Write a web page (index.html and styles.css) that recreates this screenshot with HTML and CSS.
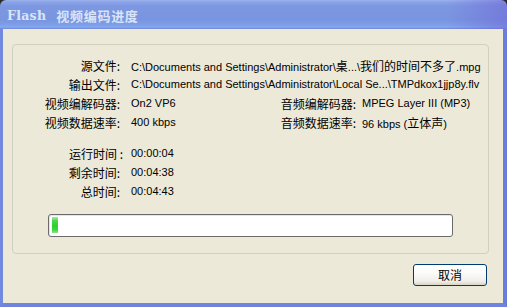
FILE: index.html
```html
<!DOCTYPE html>
<html>
<head>
<meta charset="utf-8">
<link rel="stylesheet" href="styles.css">
</head>
<body>
<div class="window">
  <div class="titlebar">
    <span class="title"><span class="t-lat">Flash</span><span class="t-zh">视频编码进度</span></span>
  </div>
  <div class="frame">
    <div class="group">
      <div class="info">
        <div class="lbl">源文件:</div>
        <div class="val wide">C:\Documents and Settings\Administrator\<span class="zh">桌</span>...\<span class="zh">我们的时间不多了</span>.mpg</div>
        <div class="lbl">输出文件:</div>
        <div class="val wide">C:\Documents and Settings\Administrator\Local Se...\TMPdkox1jjp8y.flv</div>
        <div class="lbl">视频编解码器:</div>
        <div class="val">On2 VP6</div>
        <div class="lbl lbl2">音频编解码器:</div>
        <div class="val">MPEG Layer III (MP3)</div>
        <div class="lbl">视频数据速率:</div>
        <div class="val">400 kbps</div>
        <div class="lbl lbl2">音频数据速率:</div>
        <div class="val">96 kbps (<span class="zh">立体声</span>)</div>
      </div>
      <div class="times">
        <div class="lbl"><span class="nudge">运行时间 :</span></div>
        <div class="val">00:00:04</div>
        <div class="lbl">剩余时间:</div>
        <div class="val">00:04:38</div>
        <div class="lbl">总时间:</div>
        <div class="val">00:04:43</div>
      </div>
      <div class="progress"><div class="chunk"></div></div>
    </div>
    <div class="actions">
      <button class="btn">取消</button>
    </div>
  </div>
</div>
</body>
</html>
```

FILE: styles.css
```css
html, body {
  margin: 0;
  padding: 0;
  background: #2b2b2b;
}
body {
  width: 507px;
  height: 307px;
  overflow: hidden;
}
.window {
  width: 507px;
  height: 307px;
  display: flex;
  flex-direction: column;
}
.titlebar {
  height: 29px;
  flex: none;
  border-radius: 6px 6px 0 0;
  background:
    linear-gradient(to right, rgba(110, 100, 215, 0) 88%, rgba(110, 100, 215, 0.55) 100%),
    linear-gradient(to bottom, #9db3ec 0, #8ba4e8 2px, #7d98e1 6px, #7a95df 20px, #7e9fe9 25px, #87a9ee 27px, #6f86dc 29px);
  display: flex;
  align-items: center;
  padding-left: 7px;
  box-sizing: border-box;
}
.title {
  color: #d8e4f8;
  font-weight: bold;
  display: flex;
  align-items: center;
  gap: 10px;
  margin-top: 1px;
}
.t-lat {
  font-family: "DejaVu Serif", serif;
  font-size: 12.5px;
  letter-spacing: 0.3px;
}
.t-zh {
  font-family: "Noto Sans CJK SC", sans-serif;
  font-size: 13px;
  letter-spacing: 0.7px;
}
.frame {
  flex: 1;
  background: #ece9d8;
  border-left: 3px solid #7389de;
  border-right: 4px solid #6a7ddb;
  border-bottom: 4px solid #6f84dd;
  padding: 15px 14px 0 9px;
  display: flex;
  flex-direction: column;
  font-family: "Liberation Sans", "Noto Sans CJK SC", sans-serif;
  font-size: 11px;
  color: #000;
}
.group {
  height: 210px;
  box-sizing: border-box;
  border: 1px solid #d0d0bf;
  border-radius: 4px;
  padding-top: 11px;
}
.info, .times {
  display: grid;
  grid-template-columns: 118px 148px 83px 1fr;
  grid-auto-rows: 19px;
  line-height: 19px;
}
.times {
  margin-top: 12px;
}
.lbl {
  font-family: "Noto Sans CJK SC", sans-serif;
  font-size: 12px;
  text-align: right;
  padding-right: 11px;
  white-space: nowrap;
}
.lbl2 {
  padding-right: 6px;
}
.nudge {
  margin-right: -3px;
}
.val {
  white-space: nowrap;
}
.wide {
  grid-column: 2 / 5;
}
.times .val {
  grid-column: 2 / 5;
}
.zh {
  font-family: "Noto Sans CJK SC", sans-serif;
  font-size: 12px;
}
.progress {
  margin: 13px 0 0 35px;
  width: 405px;
  height: 23px;
  box-sizing: border-box;
  border: 1px solid #6b6b6b;
  border-radius: 3px;
  background: #fff;
  box-shadow: inset 1px 1px 0 #e6e6e6;
  padding: 2px 3px;
}
.chunk {
  width: 6px;
  height: 16px;
  background: linear-gradient(to bottom, #a6eaa6 0, #45d745 25%, #2fcf2f 55%, #3fd43f 80%, #8fe38f 100%);
}
.actions {
  display: flex;
  justify-content: flex-end;
  padding-top: 10px;
  padding-right: 2px;
}
.btn {
  width: 74px;
  height: 22px;
  box-sizing: border-box;
  border: 1px solid #003c74;
  border-radius: 3px;
  background: linear-gradient(to bottom, #ffffff 0, #fbfbf9 40%, #f0efea 80%, #d8d5c8 100%);
  font-family: "Noto Sans CJK SC", sans-serif;
  font-size: 12px;
  color: #000;
  padding: 0;
  line-height: 20px;
}
```
